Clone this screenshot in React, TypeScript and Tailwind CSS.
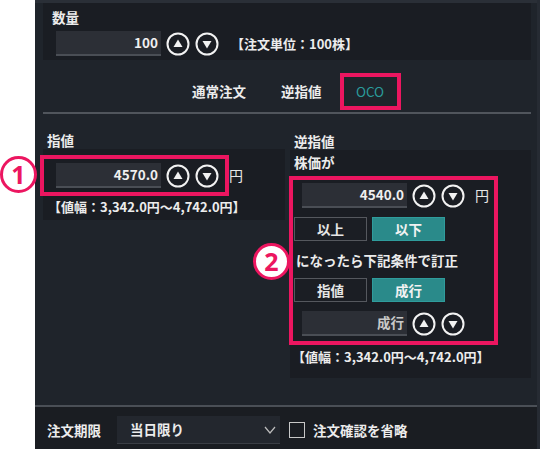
import React from 'react';

const FONT = { fontFamily: '"Noto Sans CJK JP", "Noto Sans", sans-serif' };

function CircleButton({ dir }: { dir: 'up' | 'down' }) {
  return (
    <svg width="24" height="24" viewBox="0 0 24 24" className="shrink-0">
      <circle cx="12" cy="12" r="10.5" fill="none" stroke="#f2f2f2" strokeWidth="2" />
      {dir === 'up' ? (
        <path d="M12 7.5 L16.5 15 L7.5 15 Z" fill="#f2f2f2" />
      ) : (
        <path d="M12 16.5 L16.5 9 L7.5 9 Z" fill="#f2f2f2" />
      )}
    </svg>
  );
}

function Stepper({ value, muted, unit }: { value: string; muted?: boolean; unit?: boolean }) {
  return (
    <div className="flex items-center">
      <div
        className={`w-[105px] h-[25px] bg-[#2c2f36] border-b-2 border-[#4a4e55] flex items-center justify-end pr-[3px] text-[13.5px] font-bold ${
          muted ? 'text-[#c9c9c9]' : 'text-[#f0f0f0]'
        }`}
      >
        {value}
      </div>
      <div className="flex items-center gap-[5px] ml-[5px]">
        <CircleButton dir="up" />
        <CircleButton dir="down" />
      </div>
      {unit && <span className="ml-[10px] text-[14px] text-[#e6e6e6]">円</span>}
    </div>
  );
}

function Badge({ n, className }: { n: string; className: string }) {
  return (
    <div
      className={`absolute w-[37px] h-[37px] rounded-full bg-white border-[3px] border-[#ec1660] flex items-center justify-center text-[#ec1660] text-[25px] font-bold leading-none ${className}`}
      style={{ fontFamily: '"Open Sans", "Noto Sans", sans-serif' }}
    >
      {n}
    </div>
  );
}

function Toggle({ label, active }: { label: string; active?: boolean }) {
  return (
    <div
      className={`w-[73px] h-[24px] flex items-center justify-center text-[13.5px] font-bold border ${
        active ? 'bg-[#2a8a8a] border-[#2f9c9c] text-[#f2f2f2]' : 'bg-[#1b1e24] border-[#55585e] text-[#e6e6e6]'
      }`}
    >
      {label}
    </div>
  );
}

export default function App() {
  return (
    <div className="w-[540px] h-[449px] flex bg-white overflow-hidden" style={FONT}>
      <div className="w-[35px] shrink-0" />

      <div className="relative flex-1 flex flex-col bg-[#1f242b] text-[#ececec] border-r-[3px] border-[#262b33]">
        <div className="h-[3px] bg-[#2a2f37]" />

        {/* quantity */}
        <div className="ml-[8px] mr-[6px] h-[57px] bg-[#1a1d23] pl-[13px] pt-[4px]">
          <div className="text-[13.5px] font-bold leading-[20px] -ml-[4px]">数量</div>
          <div className="flex items-center mt-[4px]">
            <Stepper value="100" />
            <span className="ml-[12px] text-[13px] font-bold">【注文単位：100株】</span>
          </div>
        </div>

        {/* order type tabs */}
        <div className="ml-[8px] mr-[6px] h-[54px] flex items-end border-b-2 border-[#50555c]">
          <div className="flex items-center h-[39px] ml-[149px] mb-[1px]">
            <span className="text-[13.5px] font-bold">通常注文</span>
            <span className="text-[13.5px] font-bold ml-[35px]">逆指値</span>
            <div className="ml-[18px] w-[61px] h-[37px] border-[4px] border-[#ec1660] flex items-center justify-center text-[13.5px] text-[#2a9c9c]">
              OCO
            </div>
          </div>
        </div>

        {/* limit / stop columns */}
        <div className="flex flex-1 ml-[8px] mr-[6px]">
          <div className="w-[242px] pt-[17px]">
            <div className="text-[13.5px] font-bold leading-[18px] pl-[4px]">指値</div>
            <div className="h-[71px] bg-[#1a1d23] pl-[13px] pt-[14px]">
              <Stepper value="4570.0" unit />
              <div className="mt-[9px] -ml-[8px] text-[13px] font-bold">【値幅：3,342.0円～4,742.0円】</div>
            </div>
          </div>

          <div className="flex-1 ml-[5px] pt-[18px]">
            <div className="text-[13.5px] font-bold leading-[18px] pl-[4px]">逆指値</div>
            <div className="h-[228px] bg-[#1a1d23]">
              <div className="text-[13.5px] font-bold leading-[20px] pl-[4px] pt-[2px]">株価が</div>
              <div className="-ml-px mt-[4px] w-[209px] border-[4px] border-[#ec1660] pl-[1px] pt-[3px] pb-[5px]">
                <div className="pl-[8px]">
                  <Stepper value="4540.0" unit />
                </div>
                <div className="flex gap-[5px] mt-[9px]">
                  <Toggle label="以上" />
                  <Toggle label="以下" active />
                </div>
                <div className="mt-[11px] text-[13.5px] font-bold leading-[16px] pl-[2px]">になったら下記条件で訂正</div>
                <div className="flex gap-[5px] mt-[10px]">
                  <Toggle label="指値" />
                  <Toggle label="成行" active />
                </div>
                <div className="pl-[8px] mt-[9px]">
                  <Stepper value="成行" muted />
                </div>
              </div>
              <div className="mt-[2px] pl-[2px] text-[13px] font-bold">【値幅：3,342.0円～4,742.0円】</div>
            </div>
          </div>
        </div>

        {/* expiry */}
        <div className="h-[44px] border-t-2 border-[#4a4f56] bg-[#1a1d22] flex items-center pl-[12px] pt-[4px]">
          <span className="text-[13.5px] font-bold">注文期限</span>
          <div className="ml-[16px] w-[163px] h-[28px] bg-[#23272e] border-b border-[#3a3e45] flex items-center justify-between pl-[13px] pr-[4px]">
            <span className="text-[13.5px] font-bold">当日限り</span>
            <svg width="12" height="8" viewBox="0 0 12 8">
              <path d="M1 1 L6 7 L11 1" fill="none" stroke="#bdbdbd" strokeWidth="1.2" />
            </svg>
          </div>
          <div className="ml-[9px] w-[16px] h-[16px] border border-[#c8c8c8] bg-[#1a1d22]" />
          <span className="ml-[8px] text-[13.5px] font-bold">注文確認を省略</span>
        </div>

        {/* highlight on the limit price stepper */}
        <div className="absolute left-[5px] top-[155px] w-[189px] h-[41px] border-[4px] border-[#ec1660]" />
      </div>

      <Badge n="1" className="left-[0px] top-[156px]" />
      <Badge n="2" className="left-[253px] top-[243px]" />
    </div>
  );
}
